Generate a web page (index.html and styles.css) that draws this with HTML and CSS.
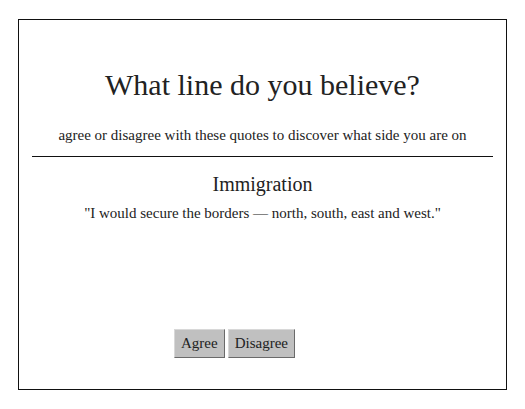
FILE: index.html
```
<!DOCTYPE html>
<html>
<head>
<meta charset="utf-8">
<link rel="stylesheet" href="styles.css">
</head>
<body>
<div class="frame">
  <header class="head">
    <h1 class="title">What line do you believe?</h1>
    <p class="subtitle">agree or disagree with these quotes to discover what side you are on</p>
  </header>
  <section class="quote-card">
    <h2 class="topic">Immigration</h2>
    <p class="quote">"I would secure the borders — north, south, east and west."</p>
  </section>
  <div class="actions">
    <button class="btn">Agree</button>
    <button class="btn">Disagree</button>
  </div>
</div>
</body>
</html>
```
FILE: styles.css
```
html, body {
  margin: 0;
  padding: 0;
  background: #fff;
}
body {
  font-family: "Liberation Serif", "DejaVu Serif", serif;
  color: #222;
}
.frame {
  box-sizing: border-box;
  margin: 19px 0 0 18px;
  width: 489px;
  height: 371px;
  border: 1.5px solid #111;
  display: flex;
  flex-direction: column;
}
.head {
  margin: 0 13px;
  border-bottom: 1.5px solid #111;
  text-align: center;
  padding-top: 47px;
}
.title {
  margin: 0;
  font-size: 30px;
  font-weight: normal;
  line-height: 36px;
}
.subtitle {
  margin: 22px 0 11px;
  font-size: 15px;
  line-height: 20px;
}
.quote-card {
  text-align: center;
  padding-top: 14px;
}
.topic {
  margin: 0;
  font-size: 20px;
  font-weight: normal;
  line-height: 26px;
}
.quote {
  margin: 6px 0 0;
  font-size: 15px;
  line-height: 20px;
}
.actions {
  margin-top: auto;
  margin-bottom: 31px;
  padding-left: 155px;
  display: flex;
  gap: 3px;
}
.btn {
  font-family: inherit;
  font-size: 15px;
  color: #222;
  background: #c0c0c0;
  border: 1px solid;
  border-color: #d8d8d8 #6a6a6a #6a6a6a #d8d8d8;
  height: 29px;
  padding: 0 6px;
}
```
